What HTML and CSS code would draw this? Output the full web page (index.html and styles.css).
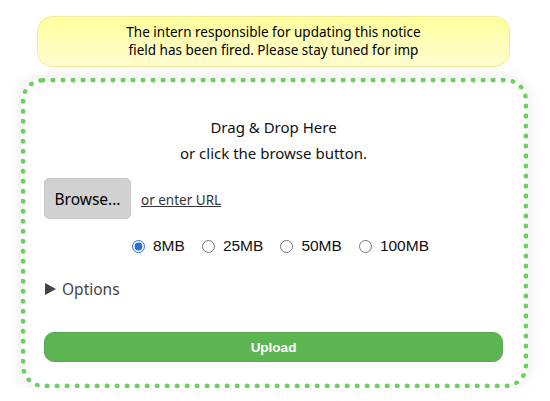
FILE: index.html
```html
<!DOCTYPE html>
<html lang="en">
<head>
    <title>Upload</title>
    <link rel="stylesheet" href="styles.css">
</head>
<body>
    <div class="notice">
        The intern responsible for updating this notice<br>
        field has been fired. Please stay tuned for imp
    </div>

    <form class="dropzone">
        <div class="drop-text">
            Drag &amp; Drop Here<br>
            or click the browse button.
        </div>

        <div class="browse-row">
            <button type="button" class="browse-button">Browse...</button>
            <a href="#" class="url-link">or enter URL</a>
        </div>

        <div class="size-row">
            <label><input type="radio" name="size" checked> 8MB</label>
            <label><input type="radio" name="size"> 25MB</label>
            <label><input type="radio" name="size"> 50MB</label>
            <label><input type="radio" name="size"> 100MB</label>
        </div>

        <details class="options">
            <summary>Options</summary>
        </details>

        <button type="button" class="upload-button">Upload</button>
    </form>
</body>
</html>
```

FILE: styles.css
```css
body {
    font-family: "Noto Sans", sans-serif;
    margin: 0;
    padding: 16px 22px 0 21px;
    background-color: #fff;
    color: #111;
}

.notice {
    margin: 0 18px 0 16px;
    padding: 6px 10px 7px;
    border: 1px solid #f2ea9c;
    border-radius: 15px;
    background: linear-gradient(#ffff9e, #fffccf);
    text-align: center;
    font-size: 13.5px;
    line-height: 18px;
    color: #000;
}

.dropzone {
    margin-top: 11px;
    padding: 31px 20px 21px 18px;
    border: 5px dotted #6ad25c;
    border-radius: 22px;
    box-shadow: 0 0 14px rgba(0, 0, 0, 0.1);
    display: flex;
    flex-direction: column;
}

.drop-text {
    text-align: center;
    font-size: 15px;
    line-height: 26px;
}

.browse-row {
    margin-top: 12px;
    display: flex;
    align-items: center;
    gap: 10px;
}

.browse-button {
    width: 87px;
    height: 41px;
    background-color: #d1d1d1;
    border: 1px solid #c6c6c6;
    border-radius: 5px;
    font-family: "Noto Sans", sans-serif;
    font-size: 15.5px;
    color: #000;
    padding: 0;
}

.url-link {
    font-size: 13.5px;
    color: #333;
    margin-top: 3px;
}

.size-row {
    margin-top: 17px;
    display: flex;
    justify-content: center;
    gap: 17px;
    padding-left: 14px;
    font-family: "Liberation Sans", Arial, sans-serif;
    font-size: 15.5px;
    line-height: 20px;
}

.size-row label {
    display: flex;
    align-items: center;
    gap: 8px;
}

.size-row input {
    margin: 0;
    width: 13px;
    height: 13px;
    accent-color: #2a6fe0;
}

.options {
    margin-top: 22px;
    font-size: 15.5px;
    line-height: 22px;
    color: #444;
}

.options summary {
    list-style: none;
    display: flex;
    align-items: center;
    cursor: pointer;
}

.options summary::-webkit-details-marker {
    display: none;
}

.options summary::before {
    content: "";
    width: 0;
    height: 0;
    margin: 0 6px 0 1px;
    border-left: 11px solid #444;
    border-top: 6.5px solid transparent;
    border-bottom: 6.5px solid transparent;
}

.upload-button {
    margin-top: 32px;
    height: 30px;
    background-color: #5db552;
    border: 1px solid #56a84c;
    border-radius: 10px;
    color: #fff;
    font-family: "Liberation Sans", Arial, sans-serif;
    font-weight: bold;
    font-size: 13.5px;
    cursor: pointer;
}
```
